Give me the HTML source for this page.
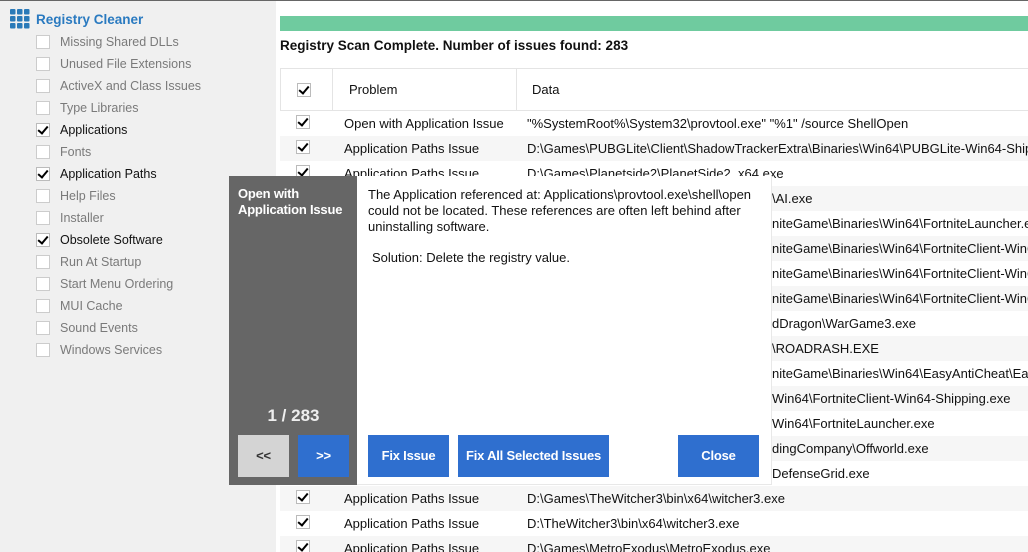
<!DOCTYPE html>
<html><head><meta charset="utf-8"><style>
*{margin:0;padding:0;box-sizing:border-box}
html,body{width:1028px;height:552px;overflow:hidden}
body{position:relative;background:#fff;font-family:"Liberation Sans",sans-serif;font-size:12px;color:#111}
.abs{position:absolute}
#side{left:0;top:0;width:276px;height:552px;background:#f0f0f0;border-top:1px solid #666}
#top{left:276px;top:0;width:752px;height:1px;background:#666}
.cb{position:absolute;width:14px;height:14px;border:1px solid #ccc;background:#fff}
.cb.on{border-color:#bbb}
.cb.on:after{content:"";position:absolute;left:3px;top:0px;width:4px;height:8px;border:solid #000;border-width:0 2.5px 2.5px 0;transform:rotate(40deg)}
.si{position:absolute;left:60px;color:#7a7a7a;font-size:12.5px;line-height:16px}
.si.on{color:#111}
.row{position:absolute;left:280px;width:748px;height:25px;line-height:25px;white-space:nowrap;overflow:hidden;font-size:13px}
.row.alt{background:#f6f6f6}
.row .p{position:absolute;left:64px}
.row .d{position:absolute;left:247px}
.row .cb{left:16px;top:4px}
.btn{position:absolute;background:#2f6fcf;color:#fff;font-weight:bold;font-size:13px;text-align:center;line-height:42px;height:42px;letter-spacing:-0.2px}
</style></head><body>
<div id="side" class="abs"></div>
<div id="top" class="abs"></div>
<svg class="abs" style="left:10px;top:9px" width="20" height="20" viewBox="0 0 20 20" fill="#2a7ab8">
<rect x="0" y="0" width="5.5" height="5.5" rx="1"/><rect x="7" y="0" width="5.5" height="5.5" rx="1"/><rect x="14" y="0" width="5.5" height="5.5" rx="1"/>
<rect x="0" y="7" width="5.5" height="5.5" rx="1"/><rect x="7" y="7" width="5.5" height="5.5" rx="1"/><rect x="14" y="7" width="5.5" height="5.5" rx="1"/>
<rect x="0" y="14" width="5.5" height="5.5" rx="1"/><rect x="7" y="14" width="5.5" height="5.5" rx="1"/><rect x="14" y="14" width="5.5" height="5.5" rx="1"/>
</svg>
<div class="abs" style="left:36px;top:12px;font-weight:bold;color:#2a7ac0;font-size:13.5px">Registry Cleaner</div>

<div class="cb" style="left:36px;top:35px"></div><div class="si" style="top:34px">Missing Shared DLLs</div>
<div class="cb" style="left:36px;top:57px"></div><div class="si" style="top:56px">Unused File Extensions</div>
<div class="cb" style="left:36px;top:79px"></div><div class="si" style="top:78px">ActiveX and Class Issues</div>
<div class="cb" style="left:36px;top:101px"></div><div class="si" style="top:100px">Type Libraries</div>
<div class="cb on" style="left:36px;top:123px"></div><div class="si on" style="top:122px">Applications</div>
<div class="cb" style="left:36px;top:145px"></div><div class="si" style="top:144px">Fonts</div>
<div class="cb on" style="left:36px;top:167px"></div><div class="si on" style="top:166px">Application Paths</div>
<div class="cb" style="left:36px;top:189px"></div><div class="si" style="top:188px">Help Files</div>
<div class="cb" style="left:36px;top:211px"></div><div class="si" style="top:210px">Installer</div>
<div class="cb on" style="left:36px;top:233px"></div><div class="si on" style="top:232px">Obsolete Software</div>
<div class="cb" style="left:36px;top:255px"></div><div class="si" style="top:254px">Run At Startup</div>
<div class="cb" style="left:36px;top:277px"></div><div class="si" style="top:276px">Start Menu Ordering</div>
<div class="cb" style="left:36px;top:299px"></div><div class="si" style="top:298px">MUI Cache</div>
<div class="cb" style="left:36px;top:321px"></div><div class="si" style="top:320px">Sound Events</div>
<div class="cb" style="left:36px;top:343px"></div><div class="si" style="top:342px">Windows Services</div>

<div class="abs" style="left:280px;top:16px;width:748px;height:15px;background:#6fcb9f"></div>
<div class="abs" style="left:280px;top:38px;font-weight:bold;font-size:13.5px">Registry Scan Complete. Number of issues found: 283</div>

<div class="abs" style="left:280px;top:68px;width:748px;height:43px;border-top:1px solid #e4e4e4;border-bottom:1px solid #e4e4e4;border-left:1px solid #e4e4e4"></div>
<div class="abs" style="left:332px;top:68px;width:1px;height:43px;background:#e4e4e4"></div>
<div class="abs" style="left:516px;top:68px;width:1px;height:43px;background:#e4e4e4"></div>
<div class="cb on" style="left:297px;top:83px"></div>
<div class="abs" style="left:349px;top:82px;font-size:13px">Problem</div>
<div class="abs" style="left:532px;top:82px;font-size:13px">Data</div>

<div class="row" style="top:111px"><div class="cb on"></div><span class="p">Open with Application Issue</span><span class="d">"%SystemRoot%\System32\provtool.exe" "%1" /source ShellOpen</span></div>
<div class="row alt" style="top:136px"><div class="cb on"></div><span class="p">Application Paths Issue</span><span class="d">D:\Games\PUBGLite\Client\ShadowTrackerExtra\Binaries\Win64\PUBGLite-Win64-Shipping.exe</span></div>
<div class="row" style="top:161px"><div class="cb on"></div><span class="p">Application Paths Issue</span><span class="d">D:\Games\Planetside2\PlanetSide2_x64.exe</span></div>
<div class="row alt" style="top:186px"><span class="d" style="left:492px">\AI.exe</span></div>
<div class="row" style="top:211px"><span class="d" style="left:492px">niteGame\Binaries\Win64\FortniteLauncher.exe</span></div>
<div class="row alt" style="top:236px"><span class="d" style="left:492px">niteGame\Binaries\Win64\FortniteClient-Win64-Shipping.exe</span></div>
<div class="row" style="top:261px"><span class="d" style="left:492px">niteGame\Binaries\Win64\FortniteClient-Win64-Shipping.exe</span></div>
<div class="row alt" style="top:286px"><span class="d" style="left:492px">niteGame\Binaries\Win64\FortniteClient-Win64-Shipping.exe</span></div>
<div class="row" style="top:311px"><span class="d" style="left:492px">dDragon\WarGame3.exe</span></div>
<div class="row alt" style="top:336px"><span class="d" style="left:492px">\ROADRASH.EXE</span></div>
<div class="row" style="top:361px"><span class="d" style="left:492px">niteGame\Binaries\Win64\EasyAntiCheat\EasyAntiCheat.exe</span></div>
<div class="row alt" style="top:386px"><span class="d" style="left:492px">Win64\FortniteClient-Win64-Shipping.exe</span></div>
<div class="row" style="top:411px"><span class="d" style="left:492px">Win64\FortniteLauncher.exe</span></div>
<div class="row alt" style="top:436px"><span class="d" style="left:492px">dingCompany\Offworld.exe</span></div>
<div class="row" style="top:461px"><span class="d" style="left:492px">DefenseGrid.exe</span></div>
<div class="row alt" style="top:486px"><div class="cb on"></div><span class="p">Application Paths Issue</span><span class="d">D:\Games\TheWitcher3\bin\x64\witcher3.exe</span></div>
<div class="row" style="top:511px"><div class="cb on"></div><span class="p">Application Paths Issue</span><span class="d">D:\TheWitcher3\bin\x64\witcher3.exe</span></div>
<div class="row alt" style="top:536px"><div class="cb on"></div><span class="p">Application Paths Issue</span><span class="d">D:\Games\MetroExodus\MetroExodus.exe</span></div>

<!-- popup -->
<div class="abs" style="left:229px;top:176px;width:129px;height:309px;background:#666"></div>
<div class="abs" style="left:357px;top:176px;width:415px;height:309px;background:#fff;border-right:1px solid #e8e8e8;border-bottom:1px solid #e8e8e8"></div>
<div class="abs" style="left:238px;top:186px;color:#fff;font-weight:bold;font-size:13px;line-height:16px;letter-spacing:-0.2px">Open with<br>Application Issue</div>
<div class="abs" style="left:368px;top:187px;width:404px;font-size:13px;line-height:16px">The Application referenced at: Applications\provtool.exe\shell\open could not be located. These references are often left behind after uninstalling software.</div>
<div class="abs" style="left:372px;top:250px;font-size:13px">Solution: Delete the registry value.</div>
<div class="abs" style="left:229px;top:406px;width:129px;text-align:center;color:#eee;font-weight:bold;font-size:17px">1 / 283</div>
<div class="btn" style="left:238px;top:435px;width:51px;background:#d4d4d4;color:#333">&lt;&lt;</div>
<div class="btn" style="left:298px;top:435px;width:51px">&gt;&gt;</div>
<div class="btn" style="left:368px;top:435px;width:81px">Fix Issue</div>
<div class="btn" style="left:458px;top:435px;width:151px">Fix All Selected Issues</div>
<div class="btn" style="left:678px;top:435px;width:81px">Close</div>
</body></html>
